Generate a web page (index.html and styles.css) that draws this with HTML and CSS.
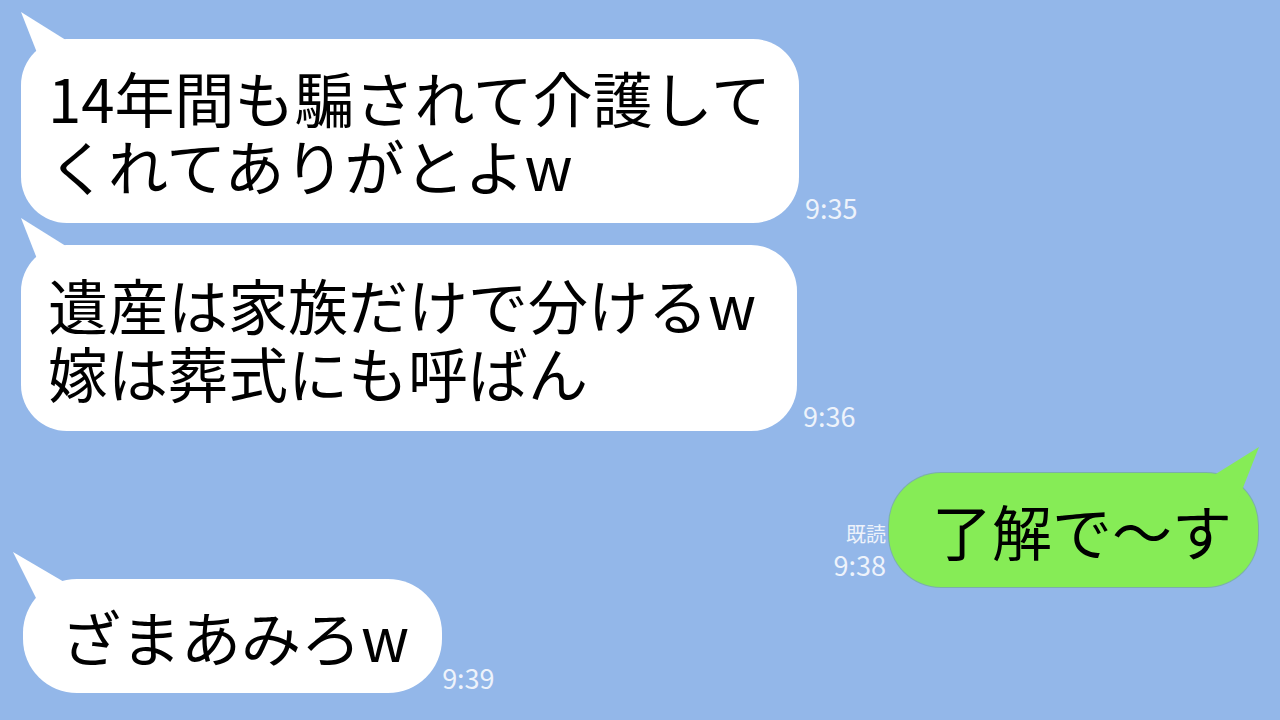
FILE: index.html
```html
<!DOCTYPE html>
<html lang="ja">
<head>
<meta charset="utf-8">
<title>chat</title>
<link rel="stylesheet" href="styles.css">
</head>
<body>
<main class="chat">
  <div class="row row-left row-1">
    <div class="bubble bubble-white bubble-wide">
      <svg class="tail tail-left" width="50" height="56" viewBox="0 0 50 56"><polygon points="0,0 22,56 48,30" fill="#fff"/></svg>
      <p class="msg">14年間も騙されて介護して<br>くれてありがとよw</p>
    </div>
    <span class="time">9:35</span>
  </div>
  <div class="row row-left row-2">
    <div class="bubble bubble-white bubble-wide">
      <svg class="tail tail-left" width="50" height="56" viewBox="0 0 50 56"><polygon points="0,0 22,56 48,30" fill="#fff"/></svg>
      <p class="msg">遺産は家族だけで分けるw<br>嫁は葬式にも呼ばん</p>
    </div>
    <span class="time">9:36</span>
  </div>
  <div class="row row-right row-3">
    <div class="meta">
      <span class="read">既読</span>
      <span class="time time-own">9:38</span>
    </div>
    <div class="bubble bubble-green">
      <svg class="tail tail-right" width="50" height="56" viewBox="0 0 50 56"><polygon points="50,0 28,56 2,30" fill="#86ec56"/></svg>
      <p class="msg">了解で〜す</p>
    </div>
  </div>
  <div class="row row-left row-4">
    <div class="bubble bubble-white bubble-short">
      <svg class="tail tail-left tail-far" width="60" height="56" viewBox="0 0 60 56"><polygon points="0,0 28,56 58,34" fill="#fff"/></svg>
      <p class="msg">ざまあみろw</p>
    </div>
    <span class="time time-close">9:39</span>
  </div>
</main>
</body>
</html>
```

FILE: styles.css
```css
* {
  box-sizing: border-box;
}

html,
body {
  margin: 0;
  padding: 0;
}

body {
  width: 1280px;
  height: 720px;
  overflow: hidden;
  background: #93b7e9;
  font-family: "Noto Sans CJK JP", "Noto Sans", sans-serif;
  color: #000;
}

.chat {
  display: flex;
  flex-direction: column;
  padding-top: 39px;
}

.row {
  display: flex;
  align-items: flex-end;
}

.row-left {
  padding-left: 21px;
}

.row-right {
  justify-content: flex-end;
  padding-right: 22px;
}

.row-2 {
  margin-top: 22px;
}

.row-3 {
  margin-top: 42px;
}

.row-4 {
  margin-top: -8px;
  padding-left: 23px;
}

.bubble {
  position: relative;
  border-radius: 46px;
}

.bubble-white {
  background: #fff;
}

.bubble-wide {
  width: 778px;
  padding: 24px 20px 24px 27px;
}

.row-2 .bubble-wide {
  width: 776px;
  padding-top: 25px;
  padding-bottom: 25px;
}

.bubble-green {
  background: #86ec56;
  padding: 23px 26px 23px 43px;
  border-radius: 52px;
  box-shadow: 0 0 0 1px rgba(80, 160, 60, 0.35);
}

.bubble-short {
  padding: 23px 33px 23px 38px;
  border-radius: 54px;
}

.msg {
  position: relative;
  margin: 0;
  font-size: 60px;
  line-height: 68px;
  white-space: nowrap;
}

.tail {
  position: absolute;
  top: -27px;
  display: block;
}

.tail-left {
  left: 0;
}

.tail-far {
  left: -10px;
}

.tail-right {
  right: -1px;
  top: -26px;
}

.time {
  font-size: 27px;
  line-height: 27px;
  color: #eef3fb;
  margin: 0 0 2px 6px;
}

.time-close {
  margin-left: 0;
}

.meta {
  display: flex;
  flex-direction: column;
  align-items: flex-end;
  margin: 0 3px 9px 0;
}

.read {
  font-size: 20px;
  line-height: 22px;
  color: #eef3fb;
  margin-bottom: 6px;
}

.time-own {
  margin: 0;
}
```
